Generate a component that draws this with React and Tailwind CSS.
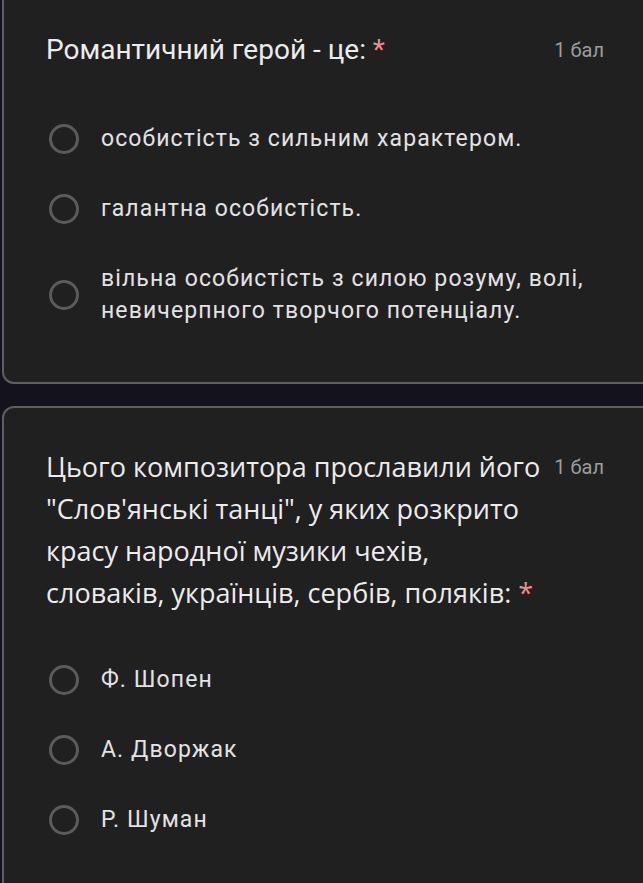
import React from 'react'

const Radio = () => (
  <span className="block w-[30px] h-[30px] shrink-0 rounded-full border-[3px] border-[#5b5b5b]" />
)

const Option = ({ children }) => (
  <div className="flex items-center py-[19px] pl-[3px]">
    <Radio />
    <span className="ml-[22px] text-[23px] leading-[32px] tracking-[1.1px] text-[#e3e3e3] font-['Roboto',sans-serif]">
      {children}
    </span>
  </div>
)

const Points = () => (
  <span className="shrink-0 text-[20px] leading-[42px] text-[#9c9c9c] font-['Roboto',sans-serif]">1 бал</span>
)

export default function App() {
  return (
    <div className="min-h-[883px] w-full overflow-hidden bg-[#14121c] pl-[2px]">
      {/* question 1 */}
      <div className="mr-[-20px] rounded-b-[12px] border-2 border-t-0 border-[#5f5f5f] bg-[#202020] pl-[42px] pr-[57px] pt-[29px] pb-[36px]">
        <div className="flex items-start justify-between">
          <h2 className="text-[28px] leading-[42px] text-[#ececec] font-['Roboto',sans-serif]">
            Романтичний герой - це: <span className="text-[#f28b82]">*</span>
          </h2>
          <Points />
        </div>
        <div className="mt-[33px]">
          <Option>особистість з сильним характером.</Option>
          <Option>галантна особистість.</Option>
          <Option>
            вільна особистість з силою розуму, волі,
            <br />
            невичерпного творчого потенціалу.
          </Option>
        </div>
      </div>

      {/* question 2 */}
      <div className="mt-[22px] mr-[-20px] rounded-t-[12px] border-2 border-b-0 border-[#5f5f5f] bg-[#202020] pl-[42px] pr-[57px] pt-[38px] pb-[40px]">
        <div className="flex items-start justify-between gap-[10px]">
          <h2 className="w-[502px] text-[27px] leading-[42px] text-[#ececec] font-['Open_Sans',sans-serif]">
            Цього композитора прославили його "Слов'янські танці", у яких розкрито красу народної музики чехів,
            словаків, українців, сербів, поляків: <span className="text-[#f28b82]">*</span>
          </h2>
          <Points />
        </div>
        <div className="mt-[31px]">
          <Option>Ф. Шопен</Option>
          <Option>А. Дворжак</Option>
          <Option>Р. Шуман</Option>
        </div>
      </div>
    </div>
  )
}
